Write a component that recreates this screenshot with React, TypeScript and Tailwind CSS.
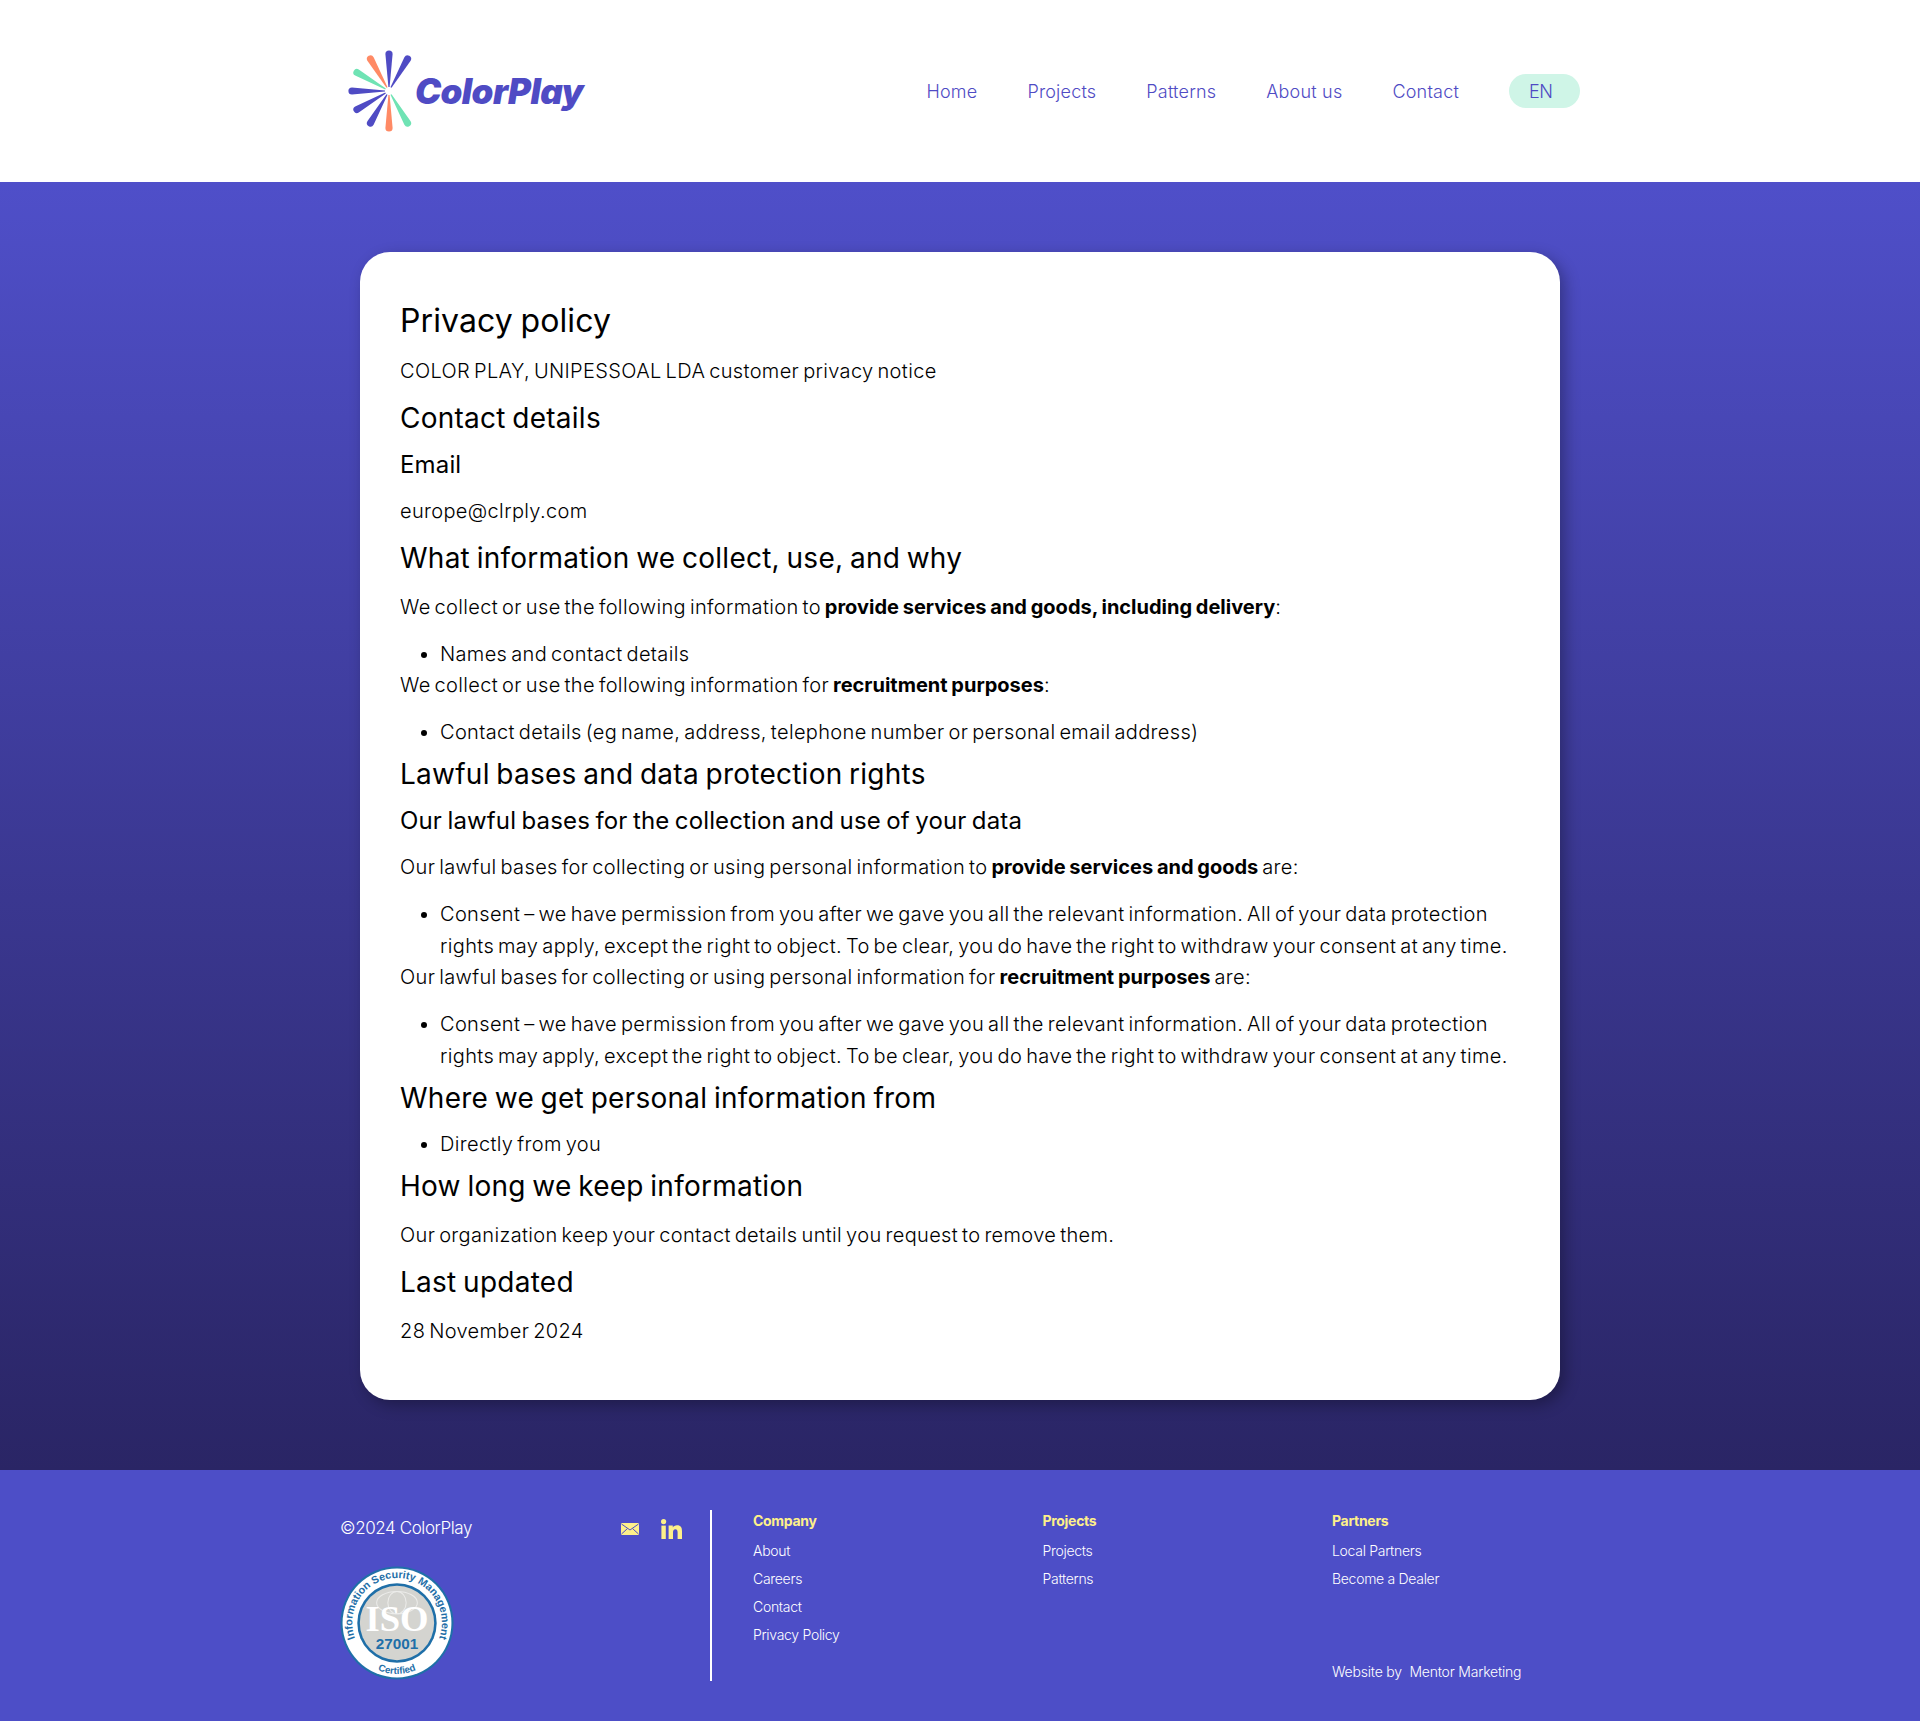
const navLinks = ["Home", "Projects", "Patterns", "About us", "Contact"]

const footerCols = [
  { title: "Company", links: ["About", "Careers", "Contact", "Privacy Policy"] },
  { title: "Projects", links: ["Projects", "Patterns"] },
  { title: "Partners", links: ["Local Partners", "Become a Dealer"] },
]

const consent =
  "Consent – we have permission from you after we gave you all the relevant information. All of your data protection rights may apply, except the right to object. To be clear, you do have the right to withdraw your consent at any time."

const rays = [
  { a: 0, c: "#4f4bc4" },
  { a: 30, c: "#4f4bc4" },
  { a: -30, c: "#ff8a65" },
  { a: -60, c: "#6fe3b4" },
  { a: -90, c: "#4f4bc4" },
  { a: -120, c: "#4f4bc4" },
  { a: -150, c: "#4f4bc4" },
  { a: 180, c: "#ff8a65" },
  { a: 150, c: "#6fe3b4" },
]

const Logo = () => (
  <div className="flex items-center">
    <svg width="86" height="86" viewBox="-43 -43 86 86">
      {rays.map((r) => (
        <g key={r.a} transform={`rotate(${r.a})`}>
          <path d="M-0.6 -4 L-3.6 -37 A3.6 3.6 0 0 1 3.6 -37 L0.6 -4 Z" fill={r.c} />
        </g>
      ))}
    </svg>
    <span className="-ml-[17px] font-['Inter',sans-serif] text-[35px] font-black tracking-[-0.6px] text-[#4f4bc4] italic">ColorPlay</span>
  </div>
)

const Badge = () => (
  <svg width="114" height="114" viewBox="0 0 112 112">
    <circle cx="56" cy="56" r="55.5" fill="#1f6fa8" />
    <circle cx="56" cy="56" r="53.5" fill="#fff" />
    <circle cx="56" cy="56" r="39" fill="#1f6fa8" />
    <circle cx="56" cy="56" r="36.5" fill="#d4d4d0" />
    <defs>
      <path id="top" d="M 18 78 A 44 44 0 1 1 94 78" />
      <path id="bot" d="M 26 96 A 50 50 0 0 0 86 96" />
    </defs>
    <text fontSize="10.5" fontWeight="700" fill="#1f6fa8" fontFamily="Liberation Sans, sans-serif">
      <textPath href="#top" startOffset="50%" textAnchor="middle">Information Security Management</textPath>
    </text>
    <text fontSize="9.5" fontWeight="700" fill="#1f6fa8" fontFamily="Liberation Sans, sans-serif">
      <textPath href="#bot" startOffset="50%" textAnchor="middle">Certified</textPath>
    </text>
    <ellipse cx="56" cy="36" rx="20" ry="11" fill="none" stroke="#ececea" strokeWidth="1" />
    <ellipse cx="56" cy="36" rx="9" ry="11" fill="none" stroke="#ececea" strokeWidth="1" />
    <text x="56" y="64" textAnchor="middle" fontSize="36" fontWeight="700" fill="#fff" fontFamily="Liberation Serif, serif">ISO</text>
    <text x="56" y="82" textAnchor="middle" fontSize="15" fontWeight="700" fill="#1f6fa8" fontFamily="Liberation Sans, sans-serif">27001</text>
  </svg>
)

const H2 = ({ children, tight }: { children: string; tight?: boolean }) => (
  <h2 className={`mt-[10px] text-[28px] leading-8 font-normal tracking-[0.25px] [word-spacing:-1.5px] ${tight ? "mb-[14px]" : "mb-[18px]"}`}>{children}</h2>
)

const H3 = ({ children }: { children: string }) => (
  <h3 className="mb-[18px] text-[24px] leading-[26px] font-normal tracking-[0.15px] [word-spacing:-1.5px]">{children}</h3>
)

const P = ({ children }: { children: React.ReactNode }) => <p className="mb-4 leading-[30px]">{children}</p>

const B = ({ children }: { children: string }) => <b className="font-bold tracking-[0px] [word-spacing:-1px]">{children}</b>

const Li = ({ children }: { children: string }) => (
  <ul className="list-disc pl-10">
    <li className="leading-8">{children}</li>
  </ul>
)

const App = () => {
  return (
    <div className="min-h-screen bg-white font-['Inter',sans-serif] text-black">
      <header className="h-[182px] bg-white">
        <div className="mx-auto flex h-full w-[1240px] items-center justify-between pl-[6px]">
          <Logo />
          <nav className="flex items-center gap-[50px] text-[18px] font-light tracking-[0.2px] text-[#4f4bc4]">
            {navLinks.map((l) => (
              <a key={l}>{l}</a>
            ))}
            <span className="flex h-[34px] w-[71px] items-center rounded-[17px] bg-[#cff5e7] pl-5 tracking-[-0.4px]">EN</span>
          </nav>
        </div>
      </header>

      <main className="bg-gradient-to-b from-[#4f4fc9] to-[#2a2565] py-[70px]">
        <div className="mx-auto w-[1200px] rounded-[30px] bg-white px-10 pt-10 pb-[38px] text-[20px] font-light tracking-[0.35px] [word-spacing:-2px] shadow-[5px_5px_15px_rgba(0,0,0,0.3)]">
          <h1 className="mt-[10px] mb-4 text-[32px] leading-[38px] font-normal tracking-[0.1px] [word-spacing:-1.5px]">Privacy policy</h1>
          <P>COLOR PLAY, UNIPESSOAL LDA customer privacy notice</P>
          <H2>Contact details</H2>
          <H3>Email</H3>
          <P>europe@clrply.com</P>
          <H2>What information we collect, use, and why</H2>
          <P>
            We collect or use the following information to <B>provide services and goods, including delivery</B>:
          </P>
          <Li>Names and contact details</Li>
          <P>
            We collect or use the following information for <B>recruitment purposes</B>:
          </P>
          <Li>Contact details (eg name, address, telephone number or personal email address)</Li>
          <H2>Lawful bases and data protection rights</H2>
          <H3>Our lawful bases for the collection and use of your data</H3>
          <P>
            Our lawful bases for collecting or using personal information to <B>provide services and goods</B> are:
          </P>
          <Li>{consent}</Li>
          <P>
            Our lawful bases for collecting or using personal information for <B>recruitment purposes</B> are:
          </P>
          <Li>{consent}</Li>
          <H2 tight>Where we get personal information from</H2>
          <Li>Directly from you</Li>
          <H2>How long we keep information</H2>
          <P>Our organization keep your contact details until you request to remove them.</P>
          <H2>Last updated</H2>
          <P>28 November 2024</P>
        </div>
      </main>

      <footer className="h-[251px] bg-[#4d4ec7] text-white">
        <div className="mx-auto flex w-[1240px] pt-10">
          <div className="w-[370px]">
            <div className="mt-[6px] flex items-center justify-between pr-7">
              <span className="text-[17px] font-light tracking-[-0.4px]">©2024 ColorPlay</span>
              <div className="flex items-center gap-[22px] text-[#fdf08a]">
                <svg width="18" height="12" viewBox="0 0 18 12">
                  <rect width="18" height="12" rx="1" fill="currentColor" />
                  <path d="M0.5 1 L9 7 L17.5 1 M0.5 11 L6.5 5.5 M17.5 11 L11.5 5.5" fill="none" stroke="#4d4ec7" strokeWidth="1" />
                </svg>
                <svg width="21" height="20" viewBox="0 0 21 20" fill="currentColor">
                  <circle cx="2.6" cy="2.6" r="2.6" />
                  <rect x="0.4" y="6.6" width="4.4" height="13.4" />
                  <path d="M7.6 6.6h4.2v1.9c.7-1.2 2.2-2.2 4.2-2.2 4 0 5 2.5 5 6V20h-4.4v-6.6c0-1.7-.4-3.2-2.2-3.2s-2.4 1.4-2.4 3.2V20H7.6z" />
                </svg>
              </div>
            </div>
            <div className="mt-6">
              <Badge />
            </div>
          </div>
          <div className="flex h-[171px] flex-1 border-l-2 border-white pl-[41px]">
            {footerCols.map((c, i) => (
              <div key={c.title} className={i === 2 ? "relative w-[240px]" : "w-[289.5px]"}>
                <h4 className="mb-[6px] text-[14px] leading-[21px] font-bold tracking-[-0.3px] text-[#fdf08a]">{c.title}</h4>
                {c.links.map((l) => (
                  <a key={l} className="block text-[14px] leading-[28px] font-light tracking-[-0.3px]">{l}</a>
                ))}
                {i === 2 && (
                  <span className="absolute top-[151px] left-0 text-[14px] leading-[21px] font-light tracking-[-0.2px] whitespace-nowrap">Website by&nbsp; Mentor Marketing</span>
                )}
              </div>
            ))}
          </div>
        </div>
      </footer>
    </div>
  )
}

export default App
